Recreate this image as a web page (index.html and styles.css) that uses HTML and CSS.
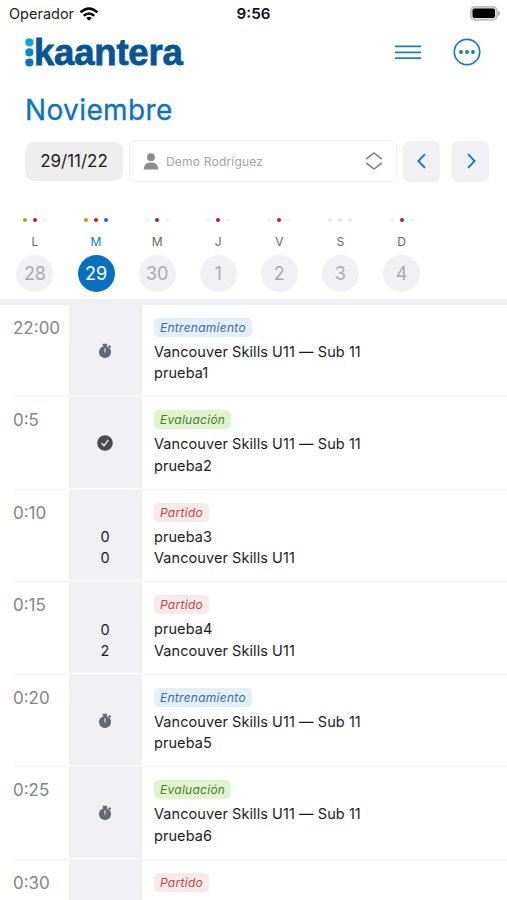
FILE: index.html
```html
<!DOCTYPE html>
<html lang="es">
<head>
<meta charset="utf-8">
<title>Kaantera</title>
<link rel="stylesheet" href="styles.css">
</head>
<body>
<svg class="defs" width="0" height="0" aria-hidden="true">
  <symbol id="timer" viewBox="0 0 16 16"><path d="M5.6.8h4.6v1.9h-.9v.5a6 6 0 1 1-2.6 0v-.5H5.6z" fill="#646873"/><path d="M12.3 1.9l1.9 1.7-1.2 1.5-1.9-1.7z" fill="#646873"/><path d="M8 5.7v3.3" stroke="#c6c8d0" stroke-width="1.5" stroke-linecap="round"/></symbol>
  <symbol id="check" viewBox="0 0 16 16"><circle cx="8" cy="8" r="7.8" fill="#4b4b4d"/><path d="M4.9 8.5l2.1 2.3 4-5.5" fill="none" stroke="#f1f0f5" stroke-width="1.4" stroke-linecap="round" stroke-linejoin="round"/></symbol>
</svg>
<header class="status">
  <div class="carrier"><span>Operador</span>
    <svg width="20" height="14" viewBox="0 0 20 14" fill="none" stroke="#000" stroke-width="2.5"><path d="M1.5 5.4Q10-2.4 18.5 5.4"/><path d="M4.8 8.8q5.2-4.6 10.4 0"/><path d="M10 13.7L7.2 10.9q2.8-2.1 5.6 0z" fill="#000" stroke="none"/></svg>
  </div>
  <div class="clock">9:56</div>
  <svg class="battery" width="32" height="15" viewBox="0 0 32 15"><rect x="1.8" y=".8" width="26.2" height="13.2" rx="4" fill="#ddd" stroke="#bcbcbc" stroke-width="1.5"/><rect x="3.5" y="2.5" width="22.5" height="9.6" rx="2" fill="#000"/><path d="M29.7 5.5q1.6 2 0 4z" fill="#aaa" stroke="#aaa"/></svg>
</header>
<div class="brandbar">
  <div class="logo">
    <svg width="9" height="29" viewBox="0 0 9 29"><circle cx="4.4" cy="4.3" r="4.1" fill="#0aa5e5"/><circle cx="4.4" cy="14.4" r="4.1" fill="#078bce"/><circle cx="4.4" cy="24.5" r="4.1" fill="#0872bd"/></svg>
    <span>kaantera</span>
  </div>
  <svg class="menu" width="28" height="28" viewBox="0 0 28 28" fill="none" stroke="#1c7dc3" stroke-width="1.8"><path d="M1 8.4h26M1 14.3h26M1 20.1h26"/></svg>
  <svg class="more" width="28" height="28" viewBox="0 0 28 28"><circle cx="14" cy="14" r="12.7" fill="none" stroke="#1577c2" stroke-width="1.7"/><g fill="#1577c2"><circle cx="8" cy="14" r="1.9"/><circle cx="14" cy="14" r="1.9"/><circle cx="20" cy="14" r="1.9"/></g></svg>
</div>
<h1 class="month"><span>Noviembre</span></h1>
<div class="filters">
  <div class="date">29/11/22</div>
  <div class="person">
    <svg width="16" height="17" viewBox="0 0 16 17" fill="#8c8c8c"><circle cx="8" cy="4.2" r="3.9"/><path d="M.8 16.5C.8 12 3.3 9.6 8 9.6s7.2 2.4 7.2 6.9z"/></svg>
    <span>Demo Rodríguez</span>
    <svg class="sort" width="18" height="20" viewBox="0 0 18 20" fill="none" stroke="#868686" stroke-width="1.6"><path d="M1.3 8L9 1.9 16.7 8M1.3 12L9 18.1 16.7 12"/></svg>
  </div>
  <div class="nav"><svg width="16" height="18" viewBox="0 0 16 18"><path d="M11 2.2L4.4 9l6.6 6.8"/></svg></div>
  <div class="nav next"><svg width="16" height="18" viewBox="0 0 16 18"><path d="M5 2.2L11.6 9 5 15.8"/></svg></div>
</div>
<div class="week">
  <div class="day"><div class="dots"><i class="g"></i><i class="r"></i><i></i></div><b>L</b><div class="num">28</div></div>
  <div class="day on"><div class="dots"><i class="g"></i><i class="r"></i><i class="b"></i></div><b>M</b><div class="num">29</div></div>
  <div class="day"><div class="dots"><i></i><i class="r"></i><i></i></div><b>M</b><div class="num">30</div></div>
  <div class="day"><div class="dots"><i></i><i class="r"></i><i></i></div><b>J</b><div class="num">1</div></div>
  <div class="day"><div class="dots"><i></i><i class="r"></i><i></i></div><b>V</b><div class="num">2</div></div>
  <div class="day"><div class="dots off"><i></i><i></i><i></i></div><b>S</b><div class="num">3</div></div>
  <div class="day"><div class="dots"><i></i><i class="r"></i><i></i></div><b>D</b><div class="num">4</div></div>
</div>
<main class="agenda">
  <article class="row"><time>22:00</time><div class="mark"><svg width="16" height="16"><use href="#timer"/></svg></div><div class="info"><em class="tag blue">Entrenamiento</em><p>Vancouver Skills U11 — Sub 11</p><p>prueba1</p></div></article>
  <article class="row"><time>0:5</time><div class="mark"><svg width="16" height="16"><use href="#check"/></svg></div><div class="info"><em class="tag green">Evaluación</em><p>Vancouver Skills U11 — Sub 11</p><p>prueba2</p></div></article>
  <article class="row"><time>0:10</time><div class="mark score"><p>0</p><p>0</p></div><div class="info"><em class="tag red">Partido</em><p>prueba3</p><p>Vancouver Skills U11</p></div></article>
  <article class="row"><time>0:15</time><div class="mark score"><p>0</p><p>2</p></div><div class="info"><em class="tag red">Partido</em><p>prueba4</p><p>Vancouver Skills U11</p></div></article>
  <article class="row"><time>0:20</time><div class="mark"><svg width="16" height="16"><use href="#timer"/></svg></div><div class="info"><em class="tag blue">Entrenamiento</em><p>Vancouver Skills U11 — Sub 11</p><p>prueba5</p></div></article>
  <article class="row"><time>0:25</time><div class="mark"><svg width="16" height="16"><use href="#timer"/></svg></div><div class="info"><em class="tag green">Evaluación</em><p>Vancouver Skills U11 — Sub 11</p><p>prueba6</p></div></article>
  <article class="row last"><time>0:30</time><div class="mark"></div><div class="info"><em class="tag red">Partido</em></div></article>
</main>
</body>
</html>
```
FILE: styles.css
```css
* { box-sizing: border-box; margin: 0; padding: 0; }
body { width: 507px; height: 900px; overflow: hidden; background: #fff; color: #1c1c1e; font-family: Inter, sans-serif; display: flex; flex-direction: column; }
.defs { display: none; }
svg { flex: none; display: block; }
.status { height: 28px; flex: none; display: grid; grid-template-columns: 1fr auto 1fr; align-items: center; padding: 0 6px 1px 9px; }
.carrier { display: flex; align-items: center; gap: 5px; font-size: 14.5px; color: #222; }
.clock { font-size: 15.2px; font-weight: 600; color: #111; margin-right: 3px; }
.battery { justify-self: end; }
.brandbar { height: 50px; flex: none; display: flex; align-items: center; padding: 0 26.5px 1.5px 25px; }
.logo { display: flex; align-items: center; flex: 1; }
.logo span { font: bold 36.5px/40px "Liberation Sans", sans-serif; letter-spacing: -.2px; color: #075592; -webkit-text-stroke: .8px #075592; padding-top: 1px; }
.menu { margin-right: 31px; }
.month { flex: none; height: 62px; padding: 14px 25px 0; font-size: 28px; line-height: 36px; font-weight: 400; letter-spacing: .38px; color: #0f72bf; -webkit-text-stroke: .3px #0f72bf; }
.filters { height: 42px; flex: none; display: flex; align-items: center; padding-left: 25px; }
.date { width: 98px; height: 39px; border-radius: 9px; background: #eeeeef; font-size: 17px; line-height: 39px; text-align: center; margin-right: 6px; }
.person { width: 268px; height: 42px; border: 1.5px solid #f1f1f3; border-radius: 7px; display: flex; align-items: center; padding: 0 13px; margin-right: 6px; font-size: 12px; letter-spacing: .2px; color: #a3a3a3; }
.person span { flex: 1; margin-left: 7px; }
.nav { width: 37px; height: 41px; border-radius: 7px; background: #f1f1f5; display: grid; place-items: center; }
.nav path { fill: none; stroke: #1879c2; stroke-width: 1.9; }
.next { margin-left: 12px; }
.week { height: 122.5px; flex: none; border-bottom: 6px solid #f1f1f5; display: flex; padding: 36px 0 0 4.4px; }
.day { width: 61.1px; display: flex; flex-direction: column; align-items: center; }
.dots { display: flex; gap: 6px; height: 4px; }
.dots i { width: 4px; height: 4px; border-radius: 50%; background: #f4f4f6; }
.dots.off i { background: #e7e7ea; }
.dots .g { background: #8dad20; }
.dots .r { background: #bb1d22; }
.dots .b { background: #1470bd; }
.day b { font-size: 12px; line-height: 16px; font-weight: 400; color: #666; margin: 12px 0 4.5px; }
.num { width: 37px; height: 37px; border-radius: 50%; background: #f1f1f5; color: #aaaaae; font-size: 18px; line-height: 37px; text-align: center; }
.on b { color: #1677c4; }
.on .num { background: #0871bf; color: #fff; }
.agenda { flex: 1; min-height: 0; overflow: hidden; }
.row { height: 92.5px; display: grid; grid-template-columns: 55.5px 73px 1fr; margin-left: 13px; border-bottom: 1.5px solid #f5f5f7; }
.last { height: 41px; border: 0; }
time { font-size: 17px; line-height: 20px; padding-top: 13px; color: #858585; }
.mark { background: #f1f0f5; display: grid; place-items: center; padding-top: 2px; margin-bottom: 1px; }
.score { display: block; padding-top: 36.5px; text-align: center; }
.info { padding: 13.3px 0 0 12.5px; }
.tag { display: block; width: fit-content; height: 19px; border-radius: 5px; padding: 0 6px; font-size: 12px; line-height: 19px; letter-spacing: .27px; margin-bottom: 4px; }
.blue { color: #426b9d; background: #e2effd; }
.green { color: #4f7b2a; background: #dff5d1; }
.red { color: #ca3f46; background: #f5ebeb; }
.row p { font-size: 14.5px; line-height: 21.3px; letter-spacing: .07px; }
```
